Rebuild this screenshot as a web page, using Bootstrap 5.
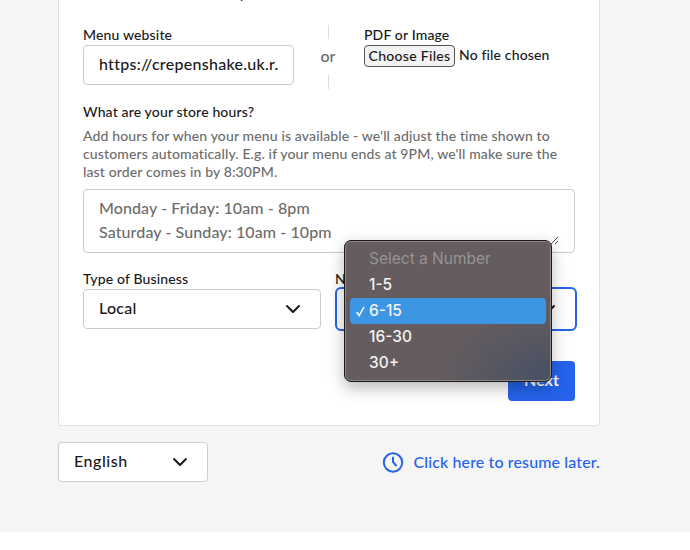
<!DOCTYPE html>
<html lang="en">
<head>
<meta charset="utf-8">
<meta name="viewport" content="width=device-width, initial-scale=1">
<title>Store details</title>
<link href="https://cdn.jsdelivr.net/npm/bootstrap@5.3.0/dist/css/bootstrap.min.css" rel="stylesheet">
<style>
  body { font-family: Lato, "Open Sans", sans-serif; font-size: 16px; font-weight: 500; color: #191919; background: #fff; height: 550px; overflow: hidden; }
  .page { height: 532px; background: #f5f5f5; padding: 0 90px 0 58px; }
  .panel { height: 426px; border: 1px solid #e1e1e1; border-top: 0; border-radius: 0 0 4px 4px; padding: 0 24px; background: #fff; }
  .intro { height: 25px; font-size: 14px; line-height: 18px; overflow: hidden; white-space: nowrap; }
  .intro span { display: block; margin-top: -15px; }
  .lbl { font-size: 14px; line-height: 18px; height: 20px; padding-top: 1px; white-space: nowrap; letter-spacing: .15px; }
  .hours-title { height: 25px; margin-top: 13px; }
  .field { height: 40px; border: 1px solid #ccc; border-radius: 4px; padding: 0 15px 2px; background: #fff; white-space: nowrap; letter-spacing: .28px; }
  .w-site { width: 211px; }
  .w-or { width: 68px; height: 64px; margin-right: 2px; color: #6c6c6c; line-height: 20px; }
  .w-or .word { margin-top: -2px; }
  .rule { width: 1px; height: 14px; background: #ddd; }
  .file-btn { height: 22px; border: 1px solid #555; border-radius: 4px; background: #f3f3f3; width: 91px; font-size: 14px; letter-spacing: .3px; padding-bottom: 2px; }
  .hint { font-size: 14px; line-height: 18px; color: #6c6c6c; white-space: nowrap; letter-spacing: .135px; }
  .hours { height: 64px; line-height: 24px; padding: 6px 15px; color: #6c6c6c; letter-spacing: .1px; }
  .grip { right: 15px; bottom: 7px; }
  .w-type { width: 238px; }
  .w-num { width: 242px; margin-right: -2px; }
  .focused { height: 44px; margin-top: -2px; border: 2px solid #2563eb; border-radius: 6px; }
  .next { width: 67px; height: 40px; margin-top: 30px; padding-bottom: 2px; background: #2563eb; color: #fff; font-weight: 700; border-radius: 4px; }
  .w-lang { width: 150px; letter-spacing: .55px; }
  .resume { color: #2563eb; letter-spacing: .12px; gap: 9px; padding-bottom: 1px; }
  .popup { left: 344px; top: 240px; width: 208px; height: 142px; border: 1px solid #1b1b1b; border-radius: 7px; padding: 4px 5px; color: #f4f2f3;
    background: radial-gradient(ellipse 110px 75px at 100% 100%, #465064, rgba(70,80,100,0) 100%), #645c5f;
    box-shadow: inset 0 0 0 1px #8c8688, 0 6px 16px rgba(0,0,0,.28); font-family: Inter, sans-serif; font-size: 15.5px; }
  .opt { height: 26px; line-height: 26px; padding: 1px 0 0 19px; border-radius: 4px; white-space: nowrap; font-weight: 550; }
  .opt.off { color: #989294; font-weight: 400; }
  .opt.on { background: #3c96e4; margin: 1px 0 -1px; padding-top: 0; }
  .tick { left: 6px; top: 8px; }
</style>
</head>
<body>
<main class="page">
  <section class="panel">
    <div class="intro"><span>Add a website or a file to your menu or store list</span></div>
    <div class="d-flex">
      <div class="w-site">
        <div class="lbl">Menu website</div>
        <div class="field d-flex align-items-center">https://crepenshake.uk.r.</div>
      </div>
      <div class="w-or d-flex flex-column align-items-center justify-content-between">
        <span class="rule"></span><span class="word">or</span><span class="rule"></span>
      </div>
      <div>
        <div class="lbl">PDF or Image</div>
        <div class="d-flex">
          <div class="file-btn d-flex align-items-center justify-content-center">Choose Files</div>
          <div class="lbl ms-1">No file chosen</div>
        </div>
      </div>
    </div>
    <div class="lbl hours-title">What are your store hours?</div>
    <div class="hint">Add hours for when your menu is available - we'll adjust the time shown to<br>customers automatically. E.g. if your menu ends at 9PM, we'll make sure the<br>last order comes in by 8:30PM.</div>
    <div class="field hours position-relative mt-2">Monday - Friday: 10am - 8pm<br>Saturday - Sunday: 10am - 10pm
      <svg class="grip position-absolute" width="9" height="9" viewBox="0 0 9 9" fill="none" stroke="#555" stroke-width="1"><path d="M1 8 8 1M5 8 8 5"/></svg>
    </div>
    <div class="d-flex justify-content-between mt-3">
      <div class="w-type">
        <div class="lbl">Type of Business</div>
        <div class="field d-flex align-items-center justify-content-between"><span>Local</span>
          <svg width="24" height="24" viewBox="0 0 24 24" fill="none" stroke="#191919" stroke-width="2" stroke-linecap="round" stroke-linejoin="round"><path d="m6 10 6 6 6-6"/></svg></div>
      </div>
      <div class="w-num">
        <div class="lbl">Number</div>
        <div class="field focused d-flex align-items-center justify-content-end">
          <svg width="24" height="24" viewBox="0 0 24 24" fill="none" stroke="#191919" stroke-width="2" stroke-linecap="round" stroke-linejoin="round"><path d="m6 10 6 6 6-6"/></svg></div>
      </div>
    </div>
    <div class="d-flex justify-content-end"><div class="next d-flex align-items-center justify-content-center">Next</div></div>
  </section>
  <footer class="d-flex justify-content-between align-items-center mt-3">
    <div class="field w-lang d-flex align-items-center justify-content-between"><span>English</span>
      <svg width="24" height="24" viewBox="0 0 24 24" fill="none" stroke="#191919" stroke-width="2" stroke-linecap="round" stroke-linejoin="round"><path d="m6 10 6 6 6-6"/></svg></div>
    <a class="resume d-flex align-items-center text-decoration-none" href="#">
      <svg width="22" height="22" viewBox="0 0 22 22" fill="none" stroke="currentColor" stroke-width="2" stroke-linecap="round"><circle cx="11" cy="11.5" r="9.2"/><path d="M11 6.5v4.5l3 3.5"/></svg>Click here to resume later.</a>
  </footer>
</main>
<div class="popup position-absolute">
  <div class="opt off">Select a Number</div>
  <div class="opt">1-5</div>
  <div class="opt on position-relative"><svg class="tick position-absolute" width="9" height="11" viewBox="0 0 9 11" fill="none" stroke="#fff" stroke-width="1.5" stroke-linecap="round"><path d="M1 6.5 3.2 9.5 7.7 1.5"/></svg>6-15</div>
  <div class="opt">16-30</div>
  <div class="opt">30+</div>
</div>
<script src="https://cdn.jsdelivr.net/npm/bootstrap@5.3.0/dist/js/bootstrap.bundle.min.js"></script>
</body>
</html>
